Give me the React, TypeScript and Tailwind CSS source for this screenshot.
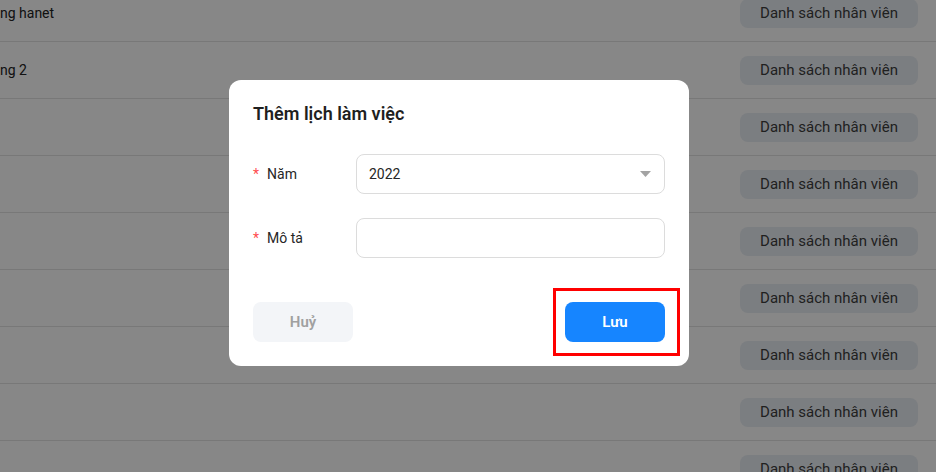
import React from 'react';

const rows = ['ng hanet', 'ng 2', '', '', '', '', '', '', ''];

export default function App() {
    return (
        <div className="relative h-[472px] w-[936px] overflow-hidden bg-white font-['Roboto',sans-serif]">
            {/* Page behind the modal */}
            <div className="-mt-[15px] flex flex-col">
                {rows.map((name, i) => (
                    <div key={i} className="flex h-[57px] items-center justify-between border-b border-[#e3e3e3] pr-[18px]">
                        <span className="text-[14px] text-[#222]">{name}</span>
                        <span className="flex h-[29px] w-[178px] items-center justify-center rounded-lg bg-[#e9eef4] text-[15px] text-[#3d3d3d]">Danh sách nhân viên</span>
                    </div>
                ))}
            </div>

            {/* Mask */}
            <div className="absolute inset-0 bg-black/[0.47]" />

            {/* Modal */}
            <div className="absolute left-[229px] top-[80px] w-[460px] rounded-xl bg-white p-6">
                <h2 className="text-[18px] font-semibold leading-5 text-[#1f1f1f]">Thêm lịch làm việc</h2>

                <div className="mt-[30px] flex flex-col gap-6">
                    <div className="flex items-center">
                        <label className="flex w-[103px] items-center text-[14px] text-[#262626]">
                            <span className="mr-[8px] text-[#ff4d4f]">*</span>Năm
                        </label>
                        <div className="flex h-[40px] flex-1 items-center justify-between rounded-lg border border-[#dcdcdc] px-3 text-[14px] text-[#262626]">
                            <span>2022</span>
                            <svg width="11" height="6" viewBox="0 0 11 6" className="mr-[1px]">
                                <path d="M0 0h11L5.5 6z" fill="#a3a3a3" />
                            </svg>
                        </div>
                    </div>
                    <div className="flex items-center">
                        <label className="flex w-[103px] items-center text-[14px] text-[#262626]">
                            <span className="mr-[8px] text-[#ff4d4f]">*</span>Mô tả
                        </label>
                        <div className="h-[40px] flex-1 rounded-lg border border-[#dcdcdc]" />
                    </div>
                </div>

                <div className="mt-[44px] flex justify-between">
                    <button className="h-[40px] w-[100px] rounded-lg bg-[#f3f5f8] text-[15px] font-semibold text-[#a0a0a0]">Huỷ</button>
                    <div className="relative">
                        <div className="absolute -bottom-[14px] -left-[12px] -right-[15px] -top-[14px] border-[3px] border-[#ff0000]" />
                        <button className="relative h-[40px] w-[100px] rounded-lg bg-[#1685ff] text-[15px] font-semibold text-white">Lưu</button>
                    </div>
                </div>
            </div>
        </div>
    );
}
